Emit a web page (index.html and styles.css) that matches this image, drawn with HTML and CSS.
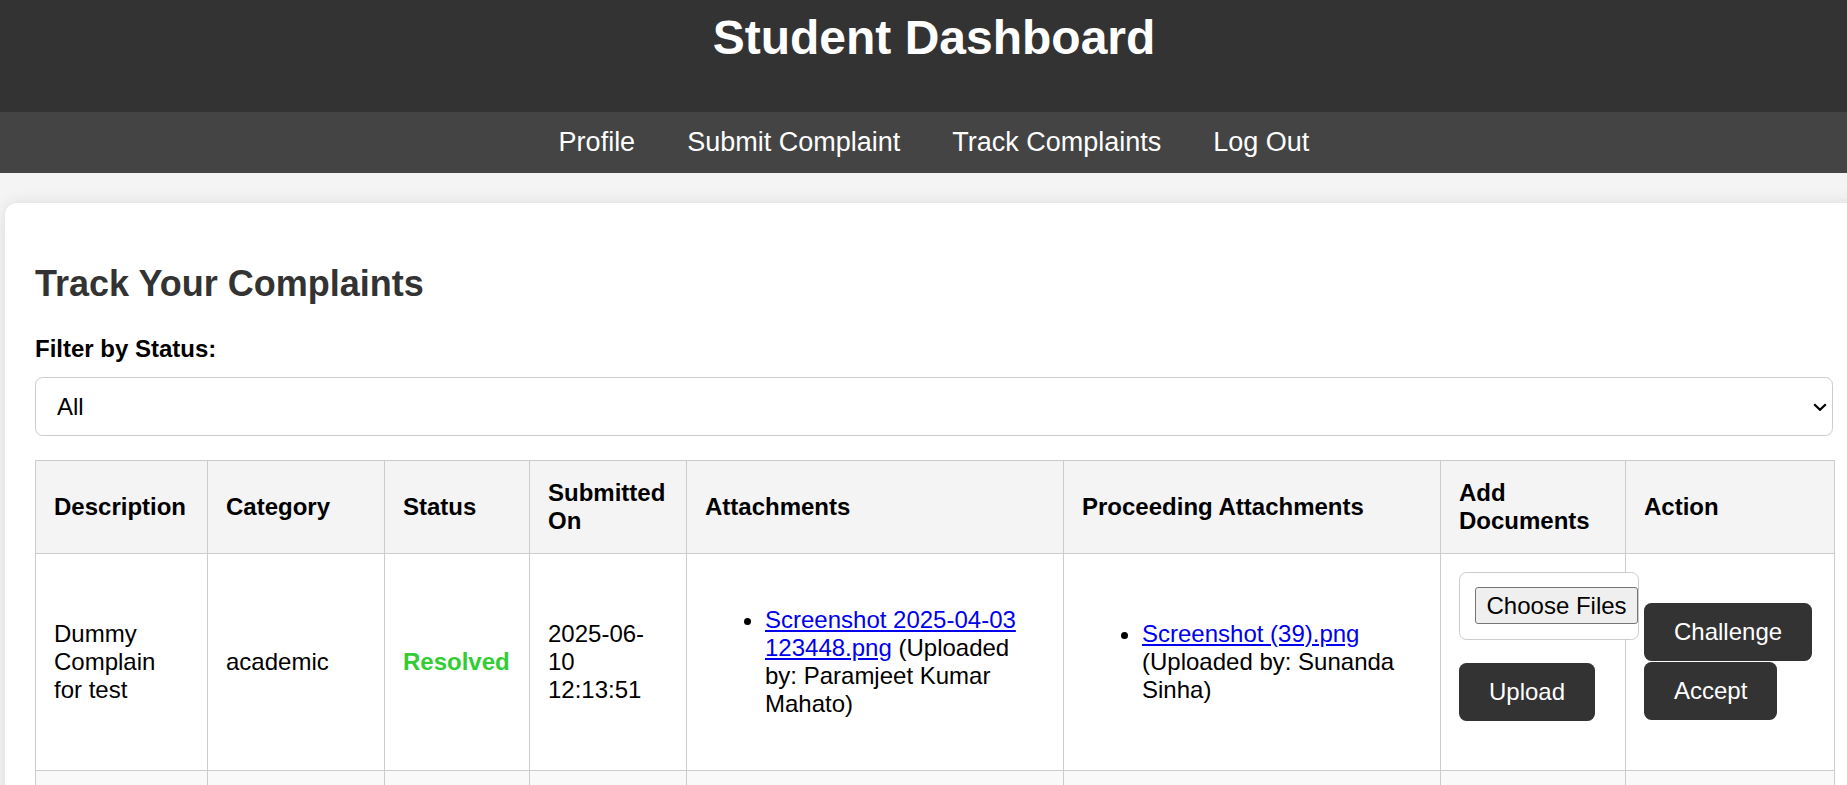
FILE: index.html
```html
<!DOCTYPE html>
<html lang="en">
<head>
<meta charset="utf-8">
<title>Student Dashboard</title>
<link rel="stylesheet" href="styles.css">
</head>
<body>
<div class="page">
  <header class="site-header">
    <h1 class="site-title">Student Dashboard</h1>
  </header>
  <nav class="site-nav">
    <a href="#">Profile</a>
    <a href="#">Submit Complaint</a>
    <a href="#">Track Complaints</a>
    <a href="#">Log Out</a>
  </nav>
  <main class="card">
    <h2 class="card-title">Track Your Complaints</h2>
    <label class="filter-label" for="status-filter">Filter by Status:</label>
    <div class="select-wrap">
      <select id="status-filter" class="filter-select">
        <option>All</option>
        <option>Pending</option>
        <option>In Progress</option>
        <option>Resolved</option>
      </select>
      <svg class="select-chevron" width="14" height="8" viewBox="0 0 14 8" aria-hidden="true"><path d="M1.2 1.2 L7 6.8 L12.8 1.2" fill="none" stroke="#000" stroke-width="2.2"/></svg>
    </div>
    <table class="complaints">
      <colgroup>
        <col class="c-desc"><col class="c-cat"><col class="c-status"><col class="c-date"><col class="c-att"><col class="c-proc"><col class="c-add"><col class="c-act">
      </colgroup>
      <thead>
        <tr>
          <th>Description</th>
          <th>Category</th>
          <th>Status</th>
          <th>Submitted On</th>
          <th>Attachments</th>
          <th>Proceeding Attachments</th>
          <th>Add Documents</th>
          <th>Action</th>
        </tr>
      </thead>
      <tbody>
        <tr>
          <td>Dummy Complain for test</td>
          <td>academic</td>
          <td><span class="status-resolved">Resolved</span></td>
          <td>2025-06-10 12:13:51</td>
          <td>
            <ul class="att-list">
              <li><a href="#">Screenshot 2025-04-03 123448.png</a> (Uploaded by: Paramjeet Kumar Mahato)</li>
            </ul>
          </td>
          <td>
            <ul class="att-list">
              <li><a href="#">Screenshot (39).png</a> (Uploaded by: Sunanda Sinha)</li>
            </ul>
          </td>
          <td>
            <form class="upload-form">
              <label class="file-box"><span class="file-btn">Choose Files</span></label>
              <button type="button" class="btn">Upload</button>
            </form>
          </td>
          <td>
            <div class="actions">
              <button type="button" class="btn">Challenge</button>
              <button type="button" class="btn">Accept</button>
            </div>
          </td>
        </tr>
        <tr>
          <td>Hostel water supply issue</td>
          <td>hostel</td>
          <td><span class="status-pending">Pending</span></td>
          <td>2025-06-12 09:41:07</td>
          <td>No attachments</td>
          <td>No attachments</td>
          <td>
            <form class="upload-form">
              <label class="file-box"><span class="file-btn">Choose Files</span></label>
              <button type="button" class="btn">Upload</button>
            </form>
          </td>
          <td></td>
        </tr>
      </tbody>
    </table>
  </main>
</div>
</body>
</html>
```
FILE: styles.css
```css
html, body {
  margin: 0;
  padding: 0;
}

html {
  overflow: hidden;
}

body {
  background: #f4f4f4;
  font-family: "Liberation Sans", Arial, sans-serif;
  font-size: 24px;
  color: #000;
}

.page {
  width: 1868px;
}

.site-header {
  background: #333;
  height: 112px;
  box-sizing: border-box;
  padding-top: 10px;
  text-align: center;
}

.site-title {
  margin: 0;
  font-size: 48px;
  font-weight: bold;
  color: #fff;
  line-height: normal;
}

.site-nav {
  background: #444;
  padding: 15px 0;
  display: flex;
  justify-content: center;
  gap: 52px;
}

.site-nav a {
  color: #fff;
  text-decoration: none;
  font-size: 27px;
  line-height: normal;
}

.card {
  display: block;
  background: #fff;
  margin: 30px 5px;
  padding: 30px;
  border-radius: 12px;
  box-shadow: 0 0 15px rgba(0, 0, 0, 0.1);
}

.card-title {
  margin: 30px 0;
  font-size: 36px;
  font-weight: bold;
  color: #333;
  line-height: normal;
}

.filter-label {
  display: block;
  font-weight: bold;
  margin-bottom: 14px;
  line-height: normal;
}

.select-wrap {
  position: relative;
  margin-bottom: 23.5px;
}

.filter-select {
  display: block;
  width: 100%;
  box-sizing: border-box;
  -webkit-appearance: none;
  appearance: none;
  background: #fff;
  border: 1px solid #ccc;
  border-radius: 7.5px;
  padding: 15px 21px;
  font: inherit;
  color: #000;
  line-height: normal;
}

.select-chevron {
  position: absolute;
  right: 6px;
  top: 26px;
  pointer-events: none;
}

.complaints {
  width: 100%;
  border-collapse: collapse;
  table-layout: fixed;
}

.c-desc { width: 172px; }
.c-cat { width: 177px; }
.c-status { width: 145px; }
.c-date { width: 157px; }
.c-att { width: 377px; }
.c-proc { width: 377px; }
.c-add { width: 185px; }
.c-act { width: 209px; }

.complaints th,
.complaints td {
  border: 1px solid #ccc;
  padding: 18px;
  text-align: left;
  vertical-align: middle;
  line-height: normal;
}

.complaints th {
  background: #f4f4f4;
  font-weight: bold;
}

.complaints tbody tr:nth-child(even) {
  background: #f9f9f9;
}

.status-resolved {
  color: #32cd32;
  font-weight: bold;
}

.status-pending {
  color: #e69500;
  font-weight: bold;
}

.att-list {
  margin: 24px 0;
  padding-left: 60px;
}

.att-list a {
  color: #00e;
  text-decoration: underline;
}

.upload-form {
  display: flex;
  flex-direction: column;
  align-items: flex-start;
  gap: 23px;
  padding-bottom: 31px;
  margin: 0;
}

.file-box {
  display: flex;
  width: max-content;
  border: 1px solid #ccc;
  border-radius: 7.5px;
  padding: 14.5px 0 14.5px 15px;
  background: #fff;
}

.file-btn {
  display: block;
  font-size: 24px;
  line-height: normal;
  padding: 3.5px 10.5px;
  border: 1px solid #767676;
  border-radius: 3px;
  background: #efefef;
  color: #000;
}

.btn {
  display: block;
  background: #333;
  color: #fff;
  border: none;
  border-radius: 7.5px;
  padding: 15px 30px;
  font-family: inherit;
  font-size: 24px;
  line-height: normal;
  margin: 0;
}

.actions {
  display: flex;
  flex-direction: column;
  align-items: flex-start;
  gap: 1.4px;
}
```
